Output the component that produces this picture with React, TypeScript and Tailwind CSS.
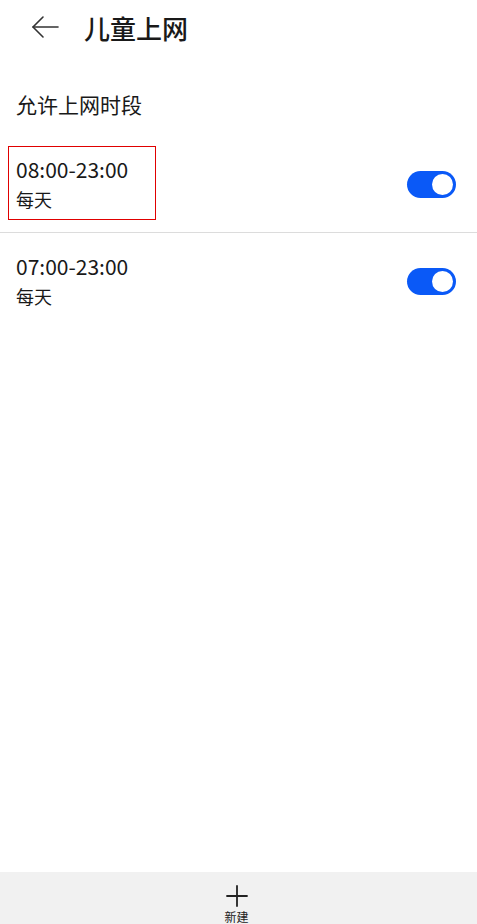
import React from "react";

function Toggle() {
  return (
    <div className="w-[49px] h-[27px] rounded-full bg-[#0a59f7] flex items-center justify-end pr-[3px]">
      <div className="w-[21px] h-[21px] rounded-full bg-white" />
    </div>
  );
}

function Row({ time, boxed }: { time: string; boxed?: boolean }) {
  return (
    <div className="relative h-[96px] flex items-center justify-between pl-4 pr-[21px]">
      <div className="flex flex-col">
        <div className="text-[21px] leading-[24px] text-[#191919]">{time}</div>
        <div className="text-[18px] leading-[24px] text-[#191919] mt-[6px]">每天</div>
      </div>
      <Toggle />
      {boxed && (
        <div className="absolute left-[8px] top-[10px] w-[148px] h-[74px] border border-[#e00000]" />
      )}
    </div>
  );
}

export default function App() {
  return (
    <div
      className="w-[477px] h-[924px] bg-white flex flex-col"
      style={{ fontFamily: '"Noto Sans CJK SC", "Noto Sans", sans-serif' }}
    >
      <div className="h-[54px] flex items-center">
        <svg className="ml-[31px]" width="28" height="24" viewBox="0 0 28 24" fill="none" stroke="#333" strokeWidth="1.6" strokeLinecap="round" strokeLinejoin="round">
          <path d="M27 12H2" />
          <path d="M12 2L2 12l10 10" />
        </svg>
        <div className="ml-[25px] text-[26px] font-medium text-[#191919]">儿童上网</div>
      </div>
      <div className="h-[82px] flex items-center pl-4 pt-[20px]">
        <div className="text-[21px] text-[#191919]">允许上网时段</div>
      </div>
      <Row time="08:00-23:00" boxed />
      <div className="h-px bg-[#dcdcdc]" />
      <Row time="07:00-23:00" />
      <div className="flex-1" />
      <div className="h-[52px] bg-[#f1f1f1] flex flex-col items-center pt-[13px] pr-[4px]">
        <svg width="22" height="22" viewBox="0 0 22 22" stroke="#222" strokeWidth="1.8" strokeLinecap="round">
          <path d="M11 1v20M1 11h20" />
        </svg>
        <div className="text-[12px] leading-[14px] text-[#222] mt-[3px]">新建</div>
      </div>
    </div>
  );
}
